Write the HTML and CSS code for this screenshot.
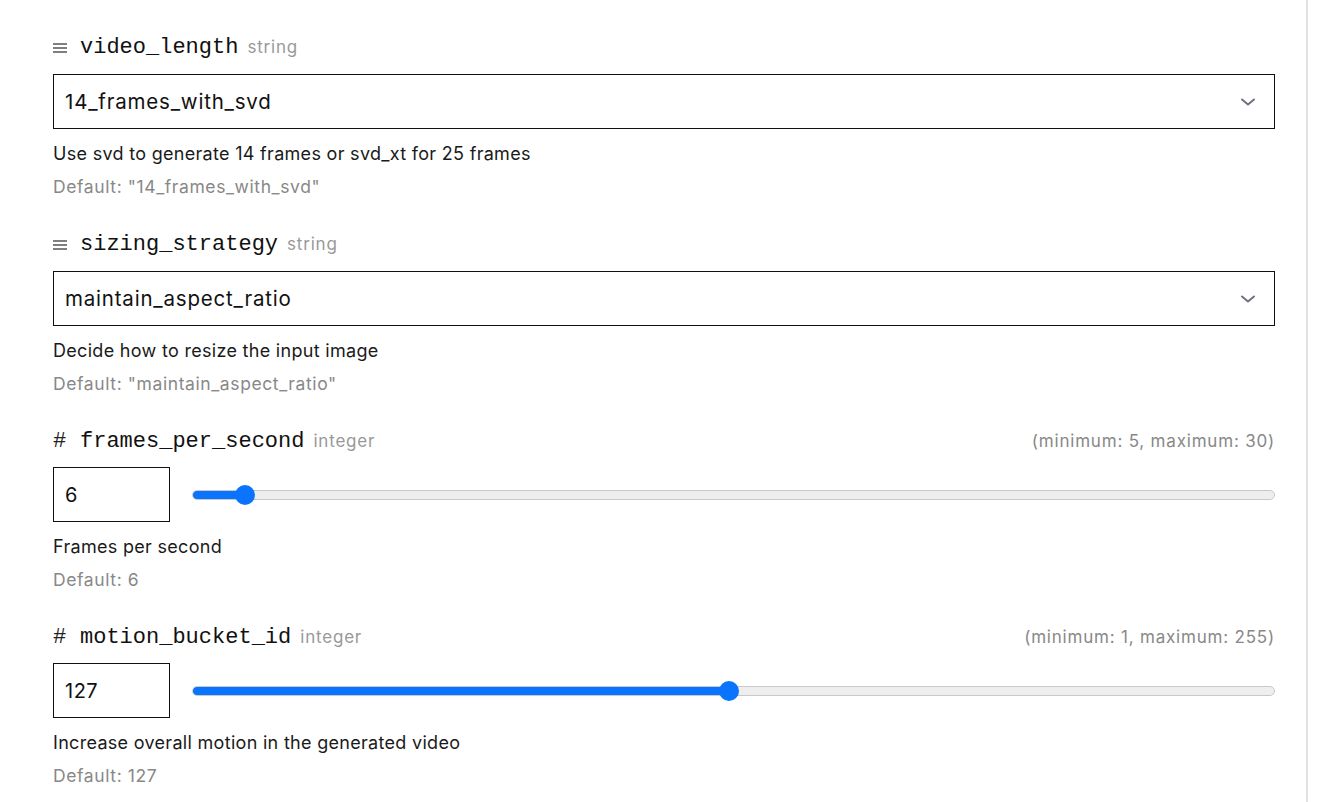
FILE: index.html
```html
<!DOCTYPE html>
<html lang="en">
<head>
<meta charset="utf-8">
<title>Inputs</title>
<link rel="stylesheet" href="styles.css">
</head>
<body>
<div class="page">
  <main class="form">
    <section class="field">
      <div class="label-row">
        <span class="kind"><svg width="14" height="10" viewBox="0 0 14 10"><path d="M0 1h14M0 5h14M0 9h14" stroke="#555" stroke-width="1.4"/></svg></span>
        <span class="name">video_length</span>
        <span class="type">string</span>
      </div>
      <div class="select">
        <span class="select-value">14_frames_with_svd</span>
        <svg class="chevron" width="16" height="16" viewBox="0 0 16 16" fill="none"><path d="M2 5.5 8 10.5l6-5" stroke="#6b7280" stroke-width="2" stroke-linecap="round" stroke-linejoin="round"/></svg>
      </div>
      <p class="desc">Use svd to generate 14 frames or svd_xt for 25 frames</p>
      <p class="default">Default: "14_frames_with_svd"</p>
    </section>

    <section class="field">
      <div class="label-row">
        <span class="kind"><svg width="14" height="10" viewBox="0 0 14 10"><path d="M0 1h14M0 5h14M0 9h14" stroke="#555" stroke-width="1.4"/></svg></span>
        <span class="name">sizing_strategy</span>
        <span class="type">string</span>
      </div>
      <div class="select">
        <span class="select-value">maintain_aspect_ratio</span>
        <svg class="chevron" width="16" height="16" viewBox="0 0 16 16" fill="none"><path d="M2 5.5 8 10.5l6-5" stroke="#6b7280" stroke-width="2" stroke-linecap="round" stroke-linejoin="round"/></svg>
      </div>
      <p class="desc">Decide how to resize the input image</p>
      <p class="default">Default: "maintain_aspect_ratio"</p>
    </section>

    <section class="field">
      <div class="label-row">
        <span class="kind hash">#</span>
        <span class="name">frames_per_second</span>
        <span class="type">integer</span>
        <span class="range-note">(minimum: 5, maximum: 30)</span>
      </div>
      <div class="num-row">
        <input class="num" type="text" value="6">
        <input class="slider" type="range" min="5" max="30" value="6" style="--pct: 4%">
      </div>
      <p class="desc">Frames per second</p>
      <p class="default">Default: 6</p>
    </section>

    <section class="field">
      <div class="label-row">
        <span class="kind hash">#</span>
        <span class="name">motion_bucket_id</span>
        <span class="type">integer</span>
        <span class="range-note">(minimum: 1, maximum: 255)</span>
      </div>
      <div class="num-row">
        <input class="num" type="text" value="127">
        <input class="slider" type="range" min="1" max="255" value="127" style="--pct: 49.6%">
      </div>
      <p class="desc">Increase overall motion in the generated video</p>
      <p class="default">Default: 127</p>
    </section>
  </main>
  <aside class="rail"></aside>
</div>
</body>
</html>
```

FILE: styles.css
```css
* { box-sizing: border-box; }

html, body {
  margin: 0;
  padding: 0;
  background: #fff;
}

body {
  font-family: "Inter", "Noto Sans", sans-serif;
  color: #111;
  overflow: hidden;
}

.page {
  display: flex;
  height: 802px;
}

.form {
  width: 1222px;
  margin-left: 53px;
  padding-top: 33px;
  display: flex;
  flex-direction: column;
  gap: 31px;
}

.rail {
  margin-left: 31px;
  width: 2px;
  background: #e2e2e2;
  height: 100%;
}

.field {
  display: flex;
  flex-direction: column;
}

.label-row {
  display: flex;
  align-items: baseline;
  height: 28px;
  line-height: 28px;
}

.kind {
  width: 27px;
  display: inline-flex;
  align-self: center;
  padding-top: 1px;
}

.kind svg {
  display: block;
}

.kind.hash {
  font-family: "Liberation Mono", monospace;
  font-size: 22px;
  color: #222;
  align-self: baseline;
  display: inline;
  padding-top: 0;
}

.name {
  font-family: "Liberation Mono", "DejaVu Sans Mono", monospace;
  font-size: 22px;
  color: #111;
}

.type {
  margin-left: 9px;
  font-size: 17px;
  letter-spacing: 0.8px;
  color: #999;
}

.range-note {
  margin-left: auto;
  font-size: 17px;
  letter-spacing: 0.8px;
  color: #888;
}

.select {
  margin-top: 13px;
  height: 55px;
  border: 1px solid #111;
  display: flex;
  align-items: center;
  justify-content: space-between;
  padding: 0 18px 0 11px;
}

.select-value {
  font-size: 20.5px;
  letter-spacing: 0.8px;
  color: #111;
}

.desc {
  margin: 13px 0 0;
  font-size: 18px;
  letter-spacing: 0.3px;
  line-height: 24px;
  color: #1a1a1a;
}

.default {
  margin: 9px 0 0;
  font-size: 17.5px;
  letter-spacing: 0.6px;
  line-height: 24px;
  color: #888;
}

.num-row {
  margin-top: 12px;
  display: flex;
  align-items: center;
  gap: 22px;
}

.num {
  width: 117px;
  height: 55px;
  border: 1px solid #111;
  border-radius: 0;
  padding: 0 11px;
  font-family: "Inter", "Noto Sans", sans-serif;
  font-size: 20px;
  letter-spacing: 0.5px;
  color: #111;
  outline: none;
  background: #fff;
}

.slider {
  -webkit-appearance: none;
  appearance: none;
  flex: 1;
  margin: 0;
  height: 22px;
  background: transparent;
}

.slider::-webkit-slider-runnable-track {
  height: 10px;
  border-radius: 5px;
  border: 1px solid #c9c9c9;
  background: linear-gradient(to right, #0a74ff 0, #0a74ff calc(10px + (100% - 20px) * var(--pct) / 100%), #eeeeee calc(10px + (100% - 20px) * var(--pct) / 100%), #eeeeee 100%);
}

.slider::-webkit-slider-thumb {
  -webkit-appearance: none;
  appearance: none;
  width: 20px;
  height: 20px;
  border-radius: 50%;
  background: #0a74ff;
  border: none;
  margin-top: -6px;
}
```
